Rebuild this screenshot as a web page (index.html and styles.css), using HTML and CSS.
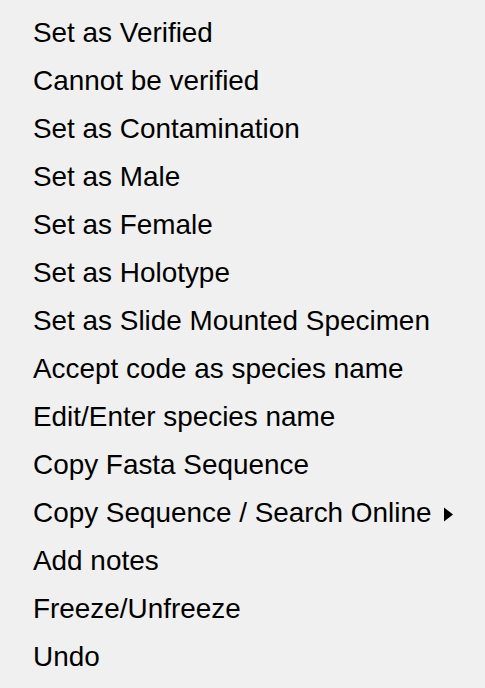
FILE: index.html
```html
<!DOCTYPE html>
<html>
<head>
<meta charset="utf-8">
<link rel="stylesheet" href="styles.css">
</head>
<body>
<div class="menu">
  <div class="item">Set as Verified</div>
  <div class="item">Cannot be verified</div>
  <div class="item">Set as Contamination</div>
  <div class="item">Set as Male</div>
  <div class="item">Set as Female</div>
  <div class="item">Set as Holotype</div>
  <div class="item">Set as Slide Mounted Specimen</div>
  <div class="item">Accept code as species name</div>
  <div class="item">Edit/Enter species name</div>
  <div class="item">Copy Fasta Sequence</div>
  <div class="item submenu"><span>Copy Sequence / Search Online</span><svg class="arrow" width="9" height="15" viewBox="0 0 9 15"><polygon points="0,0.5 9,7.5 0,14.5" fill="#000"/></svg></div>
  <div class="item">Add notes</div>
  <div class="item">Freeze/Unfreeze</div>
  <div class="item">Undo</div>
</div>
</body>
</html>
```
FILE: styles.css
```css
html, body {
  margin: 0;
  padding: 0;
  background: #f0f0f0;
}
.menu {
  width: 485px;
  height: 688px;
  box-sizing: border-box;
  padding: 9px 0 7px;
  background: #f0f0f0;
  font-family: "Liberation Sans", Arial, sans-serif;
  font-size: 27.9px;
  color: #000;
  display: flex;
  flex-direction: column;
}
.item {
  height: 48px;
  line-height: 48px;
  padding-left: 33px;
  white-space: nowrap;
  display: flex;
  align-items: center;
}
.submenu .arrow {
  margin-left: 13px;
  margin-top: 2px;
  flex: none;
}
```
